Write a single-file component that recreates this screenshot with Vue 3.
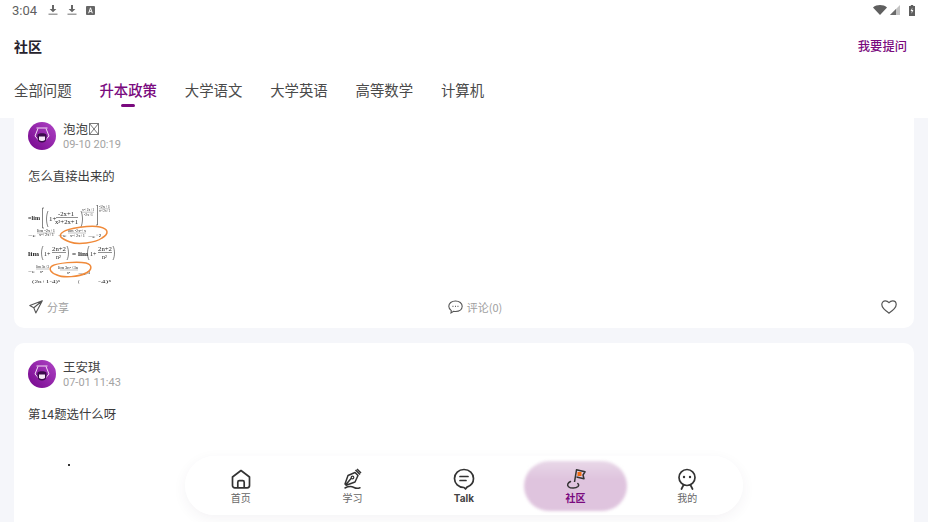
<template>
  <div class="page">
    <div class="status-bar">
      <div class="status-left">
        <span class="time">3:04</span>
        <svg class="st-ico" viewBox="0 0 10 10" width="10" height="10"><path d="M4 0h2v4h2.400L5 7.200 1.600 4H4z" fill="#666" /><rect x="0.500" y="8.600" width="9" height="1.200" fill="#888" /></svg>
        <svg class="st-ico" viewBox="0 0 10 10" width="10" height="10"><path d="M4 0h2v4h2.400L5 7.200 1.600 4H4z" fill="#666" /><rect x="0.500" y="8.600" width="9" height="1.200" fill="#888" /></svg>
        <svg class="st-ico" viewBox="0 0 10 10" width="9" height="9"><rect width="10" height="10" rx="1" fill="#666" /><path d="M3 8l2-6 2 6M3.800 6h2.400" stroke="#fff" stroke-width="1.100" fill="none" /></svg>
      </div>
      <div class="status-right">
        <svg viewBox="0 0 14 10" width="14" height="10"><path d="M0 2.400C3.800-.8 10.200-.8 14 2.400L7 10z" fill="#5f5f5f" /></svg>
        <svg viewBox="0 0 10 10" width="10" height="10"><path d="M10 0v10H0z" fill="#c4c4c4" /><path d="M6 4v6H0z" fill="#6a6a6a" /></svg>
        <svg class="battery" viewBox="0 0 6 11" width="6" height="11"><path d="M1.800 0h2.400v1H6v10H0V1h1.800z" fill="#5f5f5f" /><path d="M3.400 2.400L1.600 6h1.200l-.3 2.800L4.400 5H3.100z" fill="#fff" /></svg>
      </div>
    </div>

    <header class="top-bar">
      <span class="title">社区</span>
      <span class="ask">我要提问</span>
    </header>

    <nav class="tabs">
      <span v-for="tab in tabs" :key="tab" class="tab" :class="{ active: tab === activeTab }">{{ tab }}</span>
    </nav>

    <main class="feed">
      <div class="feed-inner">
        <article v-for="post in posts" :key="post.name" class="card">
          <div class="author">
            <svg class="avatar" viewBox="0 0 28 28" width="28" height="28">
              <defs>
                <linearGradient id="avatarFill" x1="0" y1="1" x2="1" y2="0">
                  <stop offset="0" stop-color="#74058c" />
                  <stop offset="1" stop-color="#b044c6" />
                </linearGradient>
              </defs>
              <circle cx="14" cy="14" r="14" fill="url(#avatarFill)" />
              <path d="M8.500 6h11M10 6.500L7 14l3.500 4M18 6.500l3 7.500-3.500 4" stroke="#f3dff5" stroke-width="1" fill="none" />
              <path d="M9.500 13c0-2.500 9-2.500 9 0v3c0 3-2 4.500-4.500 4.500S9.500 19 9.500 16z" fill="#3b0a4c" />
              <path d="M11 14.500h6v3.500c-1.500 1.200-4.500 1.200-6 0z" fill="#f5e8f6" />
            </svg>
            <div class="author-text">
              <div class="name">{{ post.name }}<svg v-if="post.tofu" class="tofu" viewBox="0 0 10 12" width="10" height="12"><path d="M.5.500h9v11h-9zM.5.500l9 11M9.500.500l-9 11" stroke="#555" stroke-width=".8" fill="none" /></svg></div>
              <div class="date">{{ post.date }}</div>
            </div>
          </div>
          <p class="content">{{ post.text }}</p>

          <svg v-if="post.formula" class="formula" viewBox="0 0 87 79" width="87" height="79">
            <g font-family="Liberation Serif, serif" font-size="6" fill="#1f1f1f">
              <text x="0" y="15" font-weight="700" textLength="12" lengthAdjust="spacingAndGlyphs">=lim</text>
              <path d="M16 3h-1.500v20H16M20 6c-2 5-2 11 0 16M53 6c2 5 2 11 0 16M68 0h1.500v20H68" stroke="#333" stroke-width=".6" fill="none" />
              <text x="21" y="15.500" font-size="7">1+</text>
              <text x="30" y="11" textLength="16" lengthAdjust="spacingAndGlyphs">-2x+1</text>
              <path d="M28 12.500h22" stroke="#222" stroke-width=".5" />
              <text x="27" y="19" textLength="23" lengthAdjust="spacingAndGlyphs">x²+2x+1</text>
              <text x="54" y="6" font-size="4" textLength="12" lengthAdjust="spacingAndGlyphs">x²+2x+1</text>
              <path d="M54 7.200h12" stroke="#333" stroke-width=".3" />
              <text x="56" y="11" font-size="4" textLength="9" lengthAdjust="spacingAndGlyphs">-2x+1</text>
              <text x="71" y="3" font-size="3.600" textLength="11" lengthAdjust="spacingAndGlyphs">-2x+1</text>
              <path d="M71 3.800h11" stroke="#333" stroke-width=".3" />
              <text x="71" y="7" font-size="3.600" textLength="11" lengthAdjust="spacingAndGlyphs">x²+2x+1</text>
              <text x="0" y="32" font-size="5" textLength="8" lengthAdjust="spacingAndGlyphs">=e</text>
              <text x="9" y="27" font-size="3.800" textLength="18" lengthAdjust="spacingAndGlyphs">lim -2x+1</text>
              <path d="M9 28h18" stroke="#333" stroke-width=".3" />
              <text x="11" y="31" font-size="3.800" textLength="15" lengthAdjust="spacingAndGlyphs">x²+2x+1</text>
              <text x="30" y="32" font-size="5" textLength="9" lengthAdjust="spacingAndGlyphs">=e</text>
              <text x="40" y="27" font-size="3.800" textLength="18" lengthAdjust="spacingAndGlyphs">lim -2x²+x</text>
              <path d="M40 28h18" stroke="#333" stroke-width=".3" />
              <text x="42" y="31.500" font-size="3.800" textLength="15" lengthAdjust="spacingAndGlyphs">x²+2x+1</text>
              <text x="60" y="33" font-size="5" textLength="13" lengthAdjust="spacingAndGlyphs">=e⁻²</text>
              <text x="0" y="51" font-size="6" font-weight="700" textLength="11" lengthAdjust="spacingAndGlyphs">lim</text>
              <path d="M15 41c-2 4-2 10 0 14M39 41c2 4 2 10 0 14M61 41c-2 4-2 10 0 14M85 41c2 4 2 10 0 14" stroke="#333" stroke-width=".6" fill="none" />
              <text x="16" y="51" font-size="6">1+</text>
              <text x="24" y="46" textLength="14" lengthAdjust="spacingAndGlyphs">2n+2</text>
              <path d="M24 47.500h14" stroke="#222" stroke-width=".5" />
              <text x="28" y="54">n²</text>
              <text x="44" y="51" font-size="6" font-weight="700" textLength="16" lengthAdjust="spacingAndGlyphs">= lim</text>
              <text x="62" y="51" font-size="6">1+</text>
              <text x="70" y="46" textLength="14" lengthAdjust="spacingAndGlyphs">2n+2</text>
              <path d="M70 47.500h14" stroke="#222" stroke-width=".5" />
              <text x="74" y="54">n²</text>
              <text x="0" y="68" font-size="5" textLength="7" lengthAdjust="spacingAndGlyphs">=e</text>
              <text x="8" y="63" font-size="3.800" textLength="13" lengthAdjust="spacingAndGlyphs">lim 3n+3</text>
              <path d="M8 64h13" stroke="#333" stroke-width=".3" />
              <text x="12" y="67.500" font-size="3.800">n²</text>
              <text x="30" y="64" font-size="3.800" textLength="20" lengthAdjust="spacingAndGlyphs">lim 3n²+3n</text>
              <path d="M32 65h18" stroke="#333" stroke-width=".3" />
              <text x="39" y="69" font-size="3.800">n²</text>
              <text x="50" y="70" font-size="5" textLength="12" lengthAdjust="spacingAndGlyphs">=e³</text>
              <text x="4" y="78" font-size="5" textLength="28" lengthAdjust="spacingAndGlyphs">(2n+1-4)ˣ</text>
              <text x="50" y="78" font-size="5">(</text>
              <text x="70" y="78" font-size="5" textLength="13" lengthAdjust="spacingAndGlyphs">-4)ˣ</text>
            </g>
            <path d="M35 27c5-4 28-7 37-5 9 2 9 7 2 11-7 5-24 7-32 4-8-3-13-6-7-10z" stroke="#f08a3a" stroke-width="1.500" fill="none" />
            <path d="M24 61c5-3 25-5 34-3 7 2 6 7 0 10-7 4-23 5-29 2-6-2-9-6-5-9z" stroke="#f08a3a" stroke-width="1.500" fill="none" />
          </svg>
          <div v-else class="picture"><i class="dot"></i></div>

          <div v-if="post.formula" class="actions">
            <span class="action">
              <svg viewBox="0 0 14 14" width="14" height="14"><path d="M13.300.8L.8 5.500l4 2.200 2 5.200zM13.300.8L4.800 7.700" stroke="#555" stroke-width="1.100" fill="none" stroke-linejoin="round" /></svg>
              分享
            </span>
            <span class="action">
              <svg viewBox="0 0 15 14" width="15" height="14"><path d="M7.500 1C3.600 1 .8 3.300.8 6.300c0 1.800 1 3.300 2.500 4.300l-.3 2.300 2.600-1.600c.7.100 1.400.2 2 .2 3.800 0 6.600-2.200 6.600-5.200S11.300 1 7.500 1z" stroke="#555" stroke-width="1.100" fill="none" /><path d="M4.500 6.300h.9M7 6.300h.9M9.500 6.300h.9" stroke="#555" stroke-width="1.200" /></svg>
              评论(0)
            </span>
            <svg class="heart" viewBox="0 0 16 14" width="16" height="14"><path d="M8 13.200C4.800 11 .8 8.300.8 4.600.8 2.300 2.500.9 4.300.9c1.500 0 2.800.7 3.700 1.700C8.900 1.600 10.200.9 11.700.9c1.800 0 3.500 1.400 3.500 3.700 0 3.700-4 6.400-7.200 8.600z" stroke="#555" stroke-width="1.200" fill="none" /></svg>
          </div>
        </article>
      </div>
    </main>

    <div class="bottom-nav">
      <div class="nav-item">
        <svg viewBox="0 0 22 22" width="22" height="22"><path d="M2.500 9L11 2.500 19.500 9v8.500c0 1.400-1 2.300-2.300 2.300H4.800c-1.300 0-2.300-.9-2.300-2.300z" stroke="#333" stroke-width="1.700" fill="none" stroke-linejoin="round" /><path d="M7.800 19.500v-5.300c0-1 .6-1.600 1.500-1.600h3.400c.9 0 1.500.6 1.500 1.600v5.300" stroke="#333" stroke-width="1.700" fill="none" /></svg>
        <span>首页</span>
      </div>
      <div class="nav-item">
        <svg viewBox="0 0 22 22" width="22" height="22"><path d="M14 4.500L7 7.500 4 16l1.200 1.200L14 14l3-6.500zM5 16.500l5.500-6.500M14.500 2l4.500 4.500M16 1l4 4" stroke="#333" stroke-width="1.500" fill="none" stroke-linejoin="round" /><circle cx="11.500" cy="9.500" r="1.300" stroke="#333" stroke-width="1.200" fill="none" /><path d="M4 20c3-1.500 6-2 9-.5 2 1 4 1 6 .2" stroke="#333" stroke-width="1.500" fill="none" stroke-linecap="round" /></svg>
        <span>学习</span>
      </div>
      <div class="nav-item talk">
        <svg viewBox="0 0 22 22" width="22" height="22"><path d="M11 1.500C5.600 1.500 1.500 5.400 1.500 10.500c0 5 4 9 9.500 9l1.500 1.500 1.500-1.900c3.800-1.300 6.500-4.600 6.500-8.600 0-5.100-4.100-9-9.500-9z" stroke="#333" stroke-width="1.700" fill="none" stroke-linejoin="round" /><path d="M7 8.500h8M7 12.500h6" stroke="#333" stroke-width="1.700" stroke-linecap="round" /></svg>
        <span>Talk</span>
      </div>
      <div class="nav-item active">
        <i class="pill"></i>
        <svg viewBox="0 0 22 22" width="22" height="22"><path d="M9.500 14L11.500 1.800 20 3.800 18 7l1 3.800-7.500-1.800" stroke="#333" stroke-width="1.500" fill="none" stroke-linejoin="round" /><rect x="12.500" y="4" width="4" height="4" fill="#ef6a10" /><path d="M5.500 13.500C2.800 15 1.700 17 3.500 18.700c2.300 2 7.500 1.700 9.500-.2 1-1 .8-2.100-.2-3" stroke="#333" stroke-width="1.500" fill="none" stroke-linecap="round" /></svg>
        <span>社区</span>
      </div>
      <div class="nav-item">
        <svg viewBox="0 0 22 22" width="22" height="22"><circle cx="11" cy="9.500" r="8" stroke="#333" stroke-width="1.700" fill="none" /><circle cx="8" cy="9" r="1.200" fill="#333" /><circle cx="14" cy="9" r="1.200" fill="#333" /><path d="M7.500 17l-2 4M14.500 17l2 4" stroke="#333" stroke-width="1.700" stroke-linecap="round" /></svg>
        <span>我的</span>
      </div>
    </div>
  </div>
</template>

<script setup>
const tabs = ["全部问题", "升本政策", "大学语文", "大学英语", "高等数学", "计算机"];
const activeTab = "升本政策";

const posts = [
  { name: "泡泡", tofu: true, date: "09-10 20:19", text: "怎么直接出来的", formula: true },
  { name: "王安琪", tofu: false, date: "07-01 11:43", text: "第14题选什么呀", formula: false },
];
</script>

<style>
html,
body {
  margin: 0;
  overflow: hidden;
}
</style>

<style scoped>
.page {
  position: relative;
  width: 928px;
  height: 522px;
  overflow: hidden;
  display: flex;
  flex-direction: column;
  background: #fff;
  font-family: "Noto Sans CJK SC", "Noto Sans", sans-serif;
}

.status-bar {
  height: 22px;
  flex: none;
  box-sizing: border-box;
  padding: 0 12px 2px;
  display: flex;
  align-items: center;
  justify-content: space-between;
}

.status-left {
  display: flex;
  align-items: center;
  gap: 9px;
}

.time {
  font: 13px Roboto, sans-serif;
  color: #5f5f5f;
  margin-right: 2px;
}

.status-right {
  display: flex;
  align-items: center;
  gap: 3px;
  padding-right: 1px;
}

.battery {
  margin-left: 6px;
}

.top-bar {
  height: 48px;
  flex: none;
  display: flex;
  align-items: center;
  justify-content: space-between;
  padding: 0 21px 0 14px;
}

.title {
  font-size: 14px;
  font-weight: 700;
  color: #26222c;
}

.ask {
  font-size: 12.300px;
  font-weight: 500;
  color: #7a0a7e;
}

.tabs {
  height: 48px;
  flex: none;
  box-sizing: border-box;
  display: flex;
  align-items: center;
  gap: 27.800px;
  padding: 0 14px 9px;
}

.tab {
  position: relative;
  font-size: 14.400px;
  color: #4a4a4a;
  white-space: nowrap;
}

.tab.active {
  color: #7a0a7e;
  font-weight: 500;
}

.tab.active::after {
  content: "";
  position: absolute;
  left: 22px;
  bottom: -7px;
  width: 14px;
  height: 3px;
  border-radius: 2px;
  background: #7a0a7e;
}

.feed {
  flex: 1;
  min-height: 0;
  overflow: hidden;
  background: #f5f6fa;
}

.feed-inner {
  display: flex;
  flex-direction: column;
  gap: 15px;
  padding: 0 14px;
  margin-top: -13px;
}

.card {
  background: #fff;
  border-radius: 10px;
  padding: 17px 14px 0;
  height: 223px;
  box-sizing: border-box;
  display: flex;
  flex-direction: column;
}

.author {
  display: flex;
  align-items: center;
  gap: 7px;
  height: 28px;
}

.avatar {
  flex: none;
}

.name {
  display: flex;
  align-items: center;
  font-size: 12.500px;
  line-height: 16px;
  color: #444;
}

.tofu {
  margin-left: 1px;
}

.date {
  font: 11px/14px Roboto, sans-serif;
  color: #a3a3a3;
  margin-top: 1px;
}

.content {
  margin: 17px 0 0;
  font-size: 12.400px;
  line-height: 18px;
  color: #3c3c3c;
}

.formula {
  display: block;
  flex: none;
  margin-top: 20px;
  filter: blur(0.5px);
}

.picture {
  position: relative;
  height: 100px;
}

.dot {
  position: absolute;
  left: 40px;
  top: 41px;
  width: 2px;
  height: 2px;
  background: #333;
}

.actions {
  display: flex;
  align-items: center;
  justify-content: space-between;
  margin-top: 15px;
  height: 16px;
}

.action {
  display: flex;
  align-items: center;
  gap: 4px;
  font-size: 11px;
  color: #a0a0a0;
  margin-left: 1px;
}

.action:nth-child(2) {
  margin-left: 0;
}

.heart {
  margin-right: 3px;
}

.bottom-nav {
  position: absolute;
  left: 185px;
  top: 456px;
  width: 558px;
  height: 59px;
  border-radius: 30px;
  background: rgba(255, 255, 255, 0.92);
  box-shadow: 0 4px 14px rgba(60, 50, 80, 0.06);
  display: grid;
  grid-template-columns: repeat(5, 1fr);
}

.nav-item {
  position: relative;
  display: flex;
  flex-direction: column;
  align-items: center;
  padding-top: 12px;
  font-size: 10px;
  line-height: 14px;
  color: #666;
}

.nav-item svg {
  position: relative;
  margin-bottom: 1px;
}

.nav-item span {
  position: relative;
}

.talk {
  font: 700 10px/14px Inter, Roboto, sans-serif;
  color: #444;
}

.nav-item.active {
  color: #7a0a7e;
  font-weight: 700;
}

.pill {
  position: absolute;
  left: 4px;
  top: 5px;
  width: 103px;
  height: 50px;
  border-radius: 25px;
  background: linear-gradient(#e8d8e8, #dfc4de 35%, #dfc4de);
  filter: blur(1.500px);
}
</style>
